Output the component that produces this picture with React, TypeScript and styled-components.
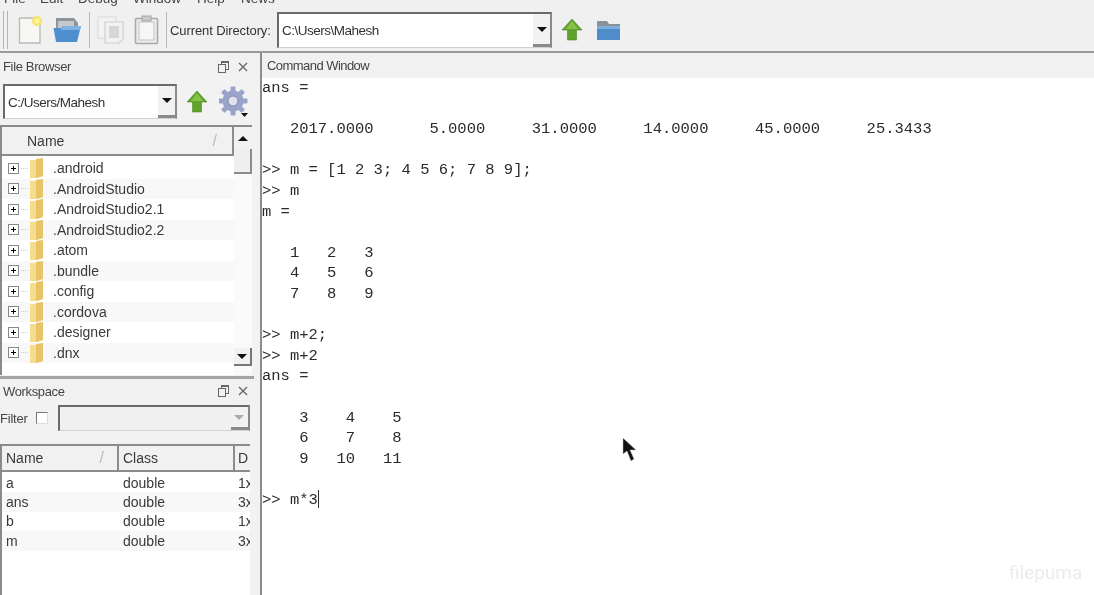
import React from "react";
import styled, { createGlobalStyle } from "styled-components";

const Global = createGlobalStyle`
  html, body { margin: 0; padding: 0; background: #fff; overflow: hidden; }
  #root { width: 1094px; height: 595px; }
`;

const Page = styled.div`
  position: relative;
  width: 1094px;
  height: 595px;
  overflow: hidden;
  display: flex;
  flex-direction: column;
  background: #f0f0f0;
  color: #333;
  font-family: "Liberation Sans", Arial, sans-serif;
  font-size: 13px;
  filter: blur(0.4px);
`;

const MenuBar = styled.div`
  height: 9px;
  flex: none;
  overflow: hidden;
  background: #f0f0f0;
`;
const MenuInner = styled.div`
  display: flex;
  margin-top: -11px;
  padding-left: 4px;
  height: 20px;
  line-height: 20px;
  font-size: 13.5px;
  color: #444;
`;
const MenuItem = styled.span<{ $w: number }>`
  width: ${(p) => p.$w}px;
  flex: none;
`;

const Toolbar = styled.div`
  height: 44px;
  flex: none;
  display: flex;
  align-items: center;
  padding-left: 3px;
  box-sizing: border-box;
  border-bottom: 2px solid #9a9a9a;
  background: #f0f0f0;
`;
const Grip = styled.div`
  width: 3px;
  height: 38px;
  border-left: 1px solid #b5b5b5;
  border-right: 1px solid #b5b5b5;
  margin-right: 10px;
`;
const Sep = styled.div`
  width: 1px;
  height: 36px;
  background: #b8b8b8;
  margin: 0 7px;
`;
const ToolIcon = styled.svg<{ $ml?: number }>`
  flex: none;
  margin-left: ${(p) => p.$ml ?? 0}px;
  display: block;
`;
const DirLabel = styled.span`
  font-size: 13px;
  letter-spacing: -0.1px;
  white-space: nowrap;
  width: 107px;
  margin-left: -4px;
  flex: none;
  color: #333;
`;

const Combo = styled.div<{ $w: number; $h: number; $disabled?: boolean; $ml?: number }>`
  width: ${(p) => p.$w}px;
  height: ${(p) => p.$h}px;
  margin-left: ${(p) => p.$ml ?? 0}px;
  flex: none;
  box-sizing: border-box;
  display: flex;
  align-items: center;
  background: ${(p) => (p.$disabled ? "#f0f0f0" : "#fff")};
  border-top: 2px solid #6a6a6a;
  border-left: 2px solid #6a6a6a;
  border-right: 2px solid #8a8a8a;
  border-bottom: 1px solid #d0d0d0;
`;
const ComboText = styled.span`
  flex: 1;
  padding-left: 3px;
  font-size: 13.5px;
  color: #333;
  letter-spacing: -0.5px;
  white-space: nowrap;
`;
const ComboBtn = styled.div<{ $muted?: boolean }>`
  width: 17px;
  align-self: stretch;
  flex: none;
  box-sizing: border-box;
  display: flex;
  align-items: center;
  justify-content: center;
  background: #f2f2f2;
  border-bottom: 3px solid #8a8a8a;
  &::after {
    content: "";
    border-left: 5px solid transparent;
    border-right: 5px solid transparent;
    border-top: 5px solid ${(p) => (p.$muted ? "#aaa" : "#111")};
  }
`;

const Body = styled.div`
  flex: 1;
  min-height: 0;
  display: flex;
`;
const Left = styled.div`
  width: 260px;
  flex: none;
  display: flex;
  flex-direction: column;
  background: #f2f2f2;
  box-sizing: border-box;
`;
const TitleBar = styled.div<{ $h: number }>`
  height: ${(p) => p.$h}px;
  flex: none;
  display: flex;
  align-items: center;
  padding: 1px 12px 0 3px;
  font-size: 13px;
  letter-spacing: -0.35px;
  color: #444;
  background: #f1f1f1;
`;
const TitleText = styled.span`
  flex: 1;
`;
const PaneBtns = styled.div`
  display: flex;
  align-items: center;
  gap: 9px;
`;

const BrowserTop = styled.div`
  height: 46px;
  flex: none;
  display: flex;
  align-items: center;
  padding: 5px 0 6px 3px;
  box-sizing: border-box;
`;

const Tree = styled.div`
  flex: none;
  width: 250px;
  height: 250px;
  display: grid;
  grid-template-columns: 232px 18px;
  grid-template-rows: 31px 1fr;
  background: #fff;
  border-left: 2px solid #8a8a8a;
  box-sizing: content-box;
`;
const HeaderCell = styled.div<{ $w?: number }>`
  box-sizing: border-box;
  display: flex;
  align-items: center;
  border-top: 2px solid #8c8c8c;
  border-bottom: 2px solid #8c8c8c;
  border-right: 2px solid #8c8c8c;
  background: #f1f1f1;
  font-size: 14px;
  color: #3a3a3a;
  ${(p) => (p.$w ? `width: ${p.$w}px; flex: none;` : "")}
`;
const NameHead = styled(HeaderCell)`
  padding-left: 25px;
  justify-content: space-between;
  padding-right: 15px;
`;
const SortMark = styled.span`
  color: #bbb;
  font-size: 16px;
`;
const Scroll = styled.div`
  grid-row: 1 / 3;
  grid-column: 2;
  display: flex;
  flex-direction: column;
  background: #fafafa;
  padding-bottom: 9px;
`;
const ScrollArrow = styled.div<{ $up?: boolean }>`
  height: ${(p) => (p.$up ? 24 : 18)}px;
  flex: none;
  display: flex;
  align-items: center;
  justify-content: center;
  background: #f1f1f1;
  box-sizing: border-box;
  ${(p) => (p.$up ? "border-top: 2px solid #8c8c8c;" : "border-bottom: 2px solid #777; border-right: 2px solid #777;")}
  &::after {
    content: "";
    border-left: 5px solid transparent;
    border-right: 5px solid transparent;
    ${(p) => (p.$up ? "border-bottom: 5px solid #111;" : "border-top: 5px solid #111;")}
  }
`;
const Thumb = styled.div`
  height: 25px;
  flex: none;
  background: #efefef;
  border-bottom: 2px solid #8c8c8c;
  border-right: 2px solid #8c8c8c;
  box-sizing: border-box;
`;
const ScrollRest = styled.div`
  flex: 1;
`;
const TreeRows = styled.div`
  padding-top: 2px;
  overflow: hidden;
`;
const TreeRow = styled.div<{ $odd: boolean }>`
  height: 20.5px;
  display: flex;
  align-items: center;
  background: ${(p) => (p.$odd ? "#f8f8f8" : "#fff")};
  font-size: 14px;
  color: #3a3a3a;
`;
const Expander = styled.span`
  width: 11px;
  height: 11px;
  margin-left: 6px;
  box-sizing: border-box;
  border: 1px solid #888;
  background: linear-gradient(#000, #000) center / 5px 1px no-repeat, linear-gradient(#000, #000) center / 1px 5px no-repeat, #fff;
  flex: none;
`;
const Dots = styled.span`
  width: 7px;
  margin: 0 1px 0 2px;
  border-top: 1px dotted #ccc;
  flex: none;
`;
const FolderText = styled.span`
  margin-left: 9px;
`;

const WorkspaceDivider = styled.div`
  height: 3px;
  flex: none;
  background: #a3a3a3;
  margin-top: 1px;
  width: 254px;
`;
const FilterRow = styled.div`
  height: 30px;
  flex: none;
  display: flex;
  align-items: center;
  font-size: 13px;
  letter-spacing: -0.2px;
  color: #444;
  margin-top: 1px;
`;
const Check = styled.span`
  width: 12px;
  height: 12px;
  margin: 0 4px 0 8px;
  background: #fff;
  border-top: 1px solid #777;
  border-left: 1px solid #777;
  border-right: 1px solid #ddd;
  border-bottom: 1px solid #ddd;
  box-sizing: border-box;
  flex: none;
`;
const Table = styled.div`
  margin-top: 11px;
  flex: 1;
  width: 250px;
  background: #fff;
  border-left: 2px solid #8a8a8a;
  box-sizing: border-box;
  display: flex;
  flex-direction: column;
`;
const TableHead = styled.div`
  height: 28px;
  flex: none;
  display: flex;
`;
const WsHead = styled(HeaderCell)`
  padding-left: 4px;
  justify-content: space-between;
  padding-right: 13px;
`;
const WsHeadLast = styled(HeaderCell)`
  padding-left: 3px;
  border-right: none;
`;
const WsRows = styled.div`
  padding-top: 1px;
`;
const WsRow = styled.div<{ $odd: boolean }>`
  height: 19.4px;
  display: flex;
  align-items: center;
  background: ${(p) => (p.$odd ? "#f8f8f8" : "#fff")};
  font-size: 14px;
  color: #3a3a3a;
  overflow: hidden;
`;
const WsCell = styled.span<{ $w: number; $pad: number }>`
  width: ${(p) => p.$w}px;
  padding-left: ${(p) => p.$pad}px;
  box-sizing: border-box;
  flex: none;
  white-space: nowrap;
  overflow: hidden;
`;

const Cmd = styled.div`
  flex: 1;
  display: flex;
  flex-direction: column;
  border-left: 2px solid #8c8c8c;
  background: #fff;
  min-width: 0;
`;
const CmdTitle = styled.div`
  height: 25px;
  flex: none;
  display: flex;
  align-items: center;
  padding-left: 5px;
  background: #f1f1f1;
  font-size: 13px;
  letter-spacing: -0.55px;
  color: #444;
`;
const Console = styled.pre`
  margin: 0;
  height: 20.6px;
  font-family: "Liberation Mono", "Courier New", monospace;
  font-size: 15.5px;
  line-height: 20.6px;
  color: #2a2a2a;
  white-space: pre;
`;
const ConsoleBox = styled.div`
  overflow: hidden;
`;
const Caret = styled.span`
  display: inline-block;
  width: 1px;
  height: 18px;
  background: #333;
  vertical-align: -4px;
`;

const Pointer = styled.svg`
  position: absolute;
  left: 622px;
  top: 437px;
`;
const Watermark = styled.span`
  position: absolute;
  left: 1009px;
  top: 561px;
  font-family: Roboto, "Liberation Sans", sans-serif;
  font-size: 19px;
  color: #ececec;
`;

const UpArrow = ({ ml = 0 }: { ml?: number }) => (
  <ToolIcon $ml={ml} width="22" height="24" viewBox="0 0 22 24">
    <path d="M11 1 L21 12 H15.5 V22 H6.5 V12 H1 Z" fill="#5fa32a" stroke="#4b8a20" strokeWidth="0.6" />
    <path d="M11 3 L17 11 H5 Z" fill="#86c24a" />
  </ToolIcon>
);

const FolderBlue = ({ ml = 0 }: { ml?: number }) => (
  <ToolIcon $ml={ml} width="25" height="22" viewBox="0 0 25 22">
    <path d="M1 2 H11 L13 5 H24 V21 H1 Z" fill="#8a9199" />
    <rect x="1" y="7" width="23" height="14" fill="#4f8cc9" />
    <rect x="1" y="7" width="23" height="3" fill="#7db0e0" />
  </ToolIcon>
);

const NewFile = () => (
  <ToolIcon width="26" height="30" viewBox="0 0 26 30">
    <path d="M1.5 3 H19 L22 6 V28 H1.5 Z" fill="#f8f7f4" stroke="#b9b9b4" strokeWidth="1.3" />
    <circle cx="19" cy="6" r="5" fill="#f5e66a" />
    <circle cx="19" cy="6" r="2.6" fill="#fff3a0" />
  </ToolIcon>
);

const OpenFolder = () => (
  <ToolIcon $ml={9} width="29" height="26" viewBox="0 0 29 26">
    <path d="M3 1 H21 L25 6 V14 H3 Z" fill="#8d949b" />
    <path d="M5 4 H21 V14 H5 Z" fill="#c6c9cc" />
    <path d="M0.5 11 H8 L10 9 H28 L24 25 H3 Z" fill="#4f8fd0" />
    <path d="M8 11 L10 9 H28 L27 13 H8 Z" fill="#7fb2e2" />
  </ToolIcon>
);

const CopyIcon = () => (
  <ToolIcon width="27" height="28" viewBox="0 0 27 28">
    <rect x="1" y="1" width="18" height="21" fill="#f3f3f3" stroke="#dcdcdc" strokeWidth="1.2" />
    <path d="M8 6 H26 V23 L22 27 H8 Z" fill="#f1f1f1" stroke="#cfcfcf" strokeWidth="1.2" />
    <rect x="12" y="10" width="10" height="12" fill="#d6d6d6" />
  </ToolIcon>
);

const PasteIcon = () => (
  <ToolIcon $ml={10} width="25" height="30" viewBox="0 0 25 30">
    <rect x="1.5" y="3.5" width="22" height="25" rx="1" fill="#ececec" stroke="#a9a9a9" strokeWidth="1.6" />
    <rect x="5" y="7" width="15" height="18" fill="#f6f6f6" stroke="#c4c4c4" />
    <rect x="8" y="1" width="9" height="5" fill="#c9c9c9" stroke="#a5a5a5" />
  </ToolIcon>
);

const Gear = () => (
  <ToolIcon $ml={11} width="30" height="32" viewBox="0 0 30 32">
    <g fill="#9aa3c9">
      <circle cx="14" cy="15" r="10.5" />
      {[0, 45, 90, 135, 180, 225, 270, 315].map((a) => (
        <rect key={a} x="11.5" y="0.5" width="5" height="6" rx="1" transform={`rotate(${a} 14 15)`} />
      ))}
    </g>
    <circle cx="14" cy="15" r="5" fill="#dfe2ee" stroke="#7f88ae" strokeWidth="1" />
    <path d="M22 27 H29 L25.5 31 Z" fill="#111" />
  </ToolIcon>
);

const RestoreClose = () => (
  <PaneBtns>
    <svg width="11" height="12" viewBox="0 0 11 12">
      <rect x="3.5" y="0.5" width="7" height="8" fill="none" stroke="#666" />
      <rect x="0.5" y="3.5" width="7" height="8" fill="#f1f1f1" stroke="#666" />
      <rect x="3" y="0" width="8" height="2" fill="#666" />
    </svg>
    <svg width="10" height="10" viewBox="0 0 10 10">
      <path d="M1 1 L9 9 M9 1 L1 9" stroke="#666" strokeWidth="1.3" />
    </svg>
  </PaneBtns>
);

const TreeFolder = () => (
  <svg width="15" height="22" viewBox="0 0 15 22" style={{ flex: "none" }}>
    <path d="M1 3 H8 L14 1 V19 L8 21 H1 Z" fill="#f6dc8d" />
    <path d="M7 2 L14 1 V19 L7 21 Z" fill="#e8c469" />
  </svg>
);

const folders = [
  ".android",
  ".AndroidStudio",
  ".AndroidStudio2.1",
  ".AndroidStudio2.2",
  ".atom",
  ".bundle",
  ".config",
  ".cordova",
  ".designer",
  ".dnx",
];

const vars = [
  ["a", "double", "1x"],
  ["ans", "double", "3x"],
  ["b", "double", "1x"],
  ["m", "double", "3x"],
];

const lines = [
  "ans =",
  "",
  "   2017.0000      5.0000     31.0000     14.0000     45.0000     25.3433",
  "",
  ">> m = [1 2 3; 4 5 6; 7 8 9];",
  ">> m",
  "m =",
  "",
  "   1   2   3",
  "   4   5   6",
  "   7   8   9",
  "",
  ">> m+2;",
  ">> m+2",
  "ans =",
  "",
  "    3    4    5",
  "    6    7    8",
  "    9   10   11",
  "",
];

export default function App() {
  return (
    <Page>
      <Global />
      <MenuBar>
        <MenuInner>
          <MenuItem $w={36}>File</MenuItem>
          <MenuItem $w={38}>Edit</MenuItem>
          <MenuItem $w={55}>Debug</MenuItem>
          <MenuItem $w={64}>Window</MenuItem>
          <MenuItem $w={44}>Help</MenuItem>
          <MenuItem $w={50}>News</MenuItem>
        </MenuInner>
      </MenuBar>
      <Toolbar>
        <Grip />
        <NewFile />
        <OpenFolder />
        <Sep />
        <CopyIcon />
        <PasteIcon />
        <Sep />
        <DirLabel>Current Directory:</DirLabel>
        <Combo $w={275} $h={36}>
          <ComboText>C:\Users\Mahesh</ComboText>
          <ComboBtn />
        </Combo>
        <UpArrow ml={9} />
        <FolderBlue ml={13} />
      </Toolbar>
      <Body>
        <Left>
          <TitleBar $h={25}>
            <TitleText>File Browser</TitleText>
            <RestoreClose />
          </TitleBar>
          <BrowserTop>
            <Combo $w={174} $h={35}>
              <ComboText>C:/Users/Mahesh</ComboText>
              <ComboBtn />
            </Combo>
            <UpArrow ml={9} />
            <Gear />
          </BrowserTop>
          <Tree>
            <NameHead>
              Name<SortMark>/</SortMark>
            </NameHead>
            <Scroll>
              <ScrollArrow $up />
              <Thumb />
              <ScrollRest />
              <ScrollArrow />
            </Scroll>
            <TreeRows>
              {folders.map((f, i) => (
                <TreeRow key={f} $odd={i % 2 === 1}>
                  <Expander />
                  <Dots />
                  <TreeFolder />
                  <FolderText>{f}</FolderText>
                </TreeRow>
              ))}
            </TreeRows>
          </Tree>
          <WorkspaceDivider />
          <TitleBar $h={22}>
            <TitleText>Workspace</TitleText>
            <RestoreClose />
          </TitleBar>
          <FilterRow>
            Filter
            <Check />
            <Combo $w={192} $h={26} $disabled $ml={6}>
              <ComboText />
              <ComboBtn $muted />
            </Combo>
          </FilterRow>
          <Table>
            <TableHead>
              <WsHead $w={117}>
                Name<SortMark>/</SortMark>
              </WsHead>
              <WsHead $w={116}>Class</WsHead>
              <WsHeadLast $w={15}>D</WsHeadLast>
            </TableHead>
            <WsRows>
              {vars.map(([n, c, d], i) => (
                <WsRow key={n} $odd={i % 2 === 1}>
                  <WsCell $w={117} $pad={4}>{n}</WsCell>
                  <WsCell $w={116} $pad={4}>{c}</WsCell>
                  <WsCell $w={15} $pad={3}>{d}</WsCell>
                </WsRow>
              ))}
            </WsRows>
          </Table>
        </Left>
        <Cmd>
          <CmdTitle>Command Window</CmdTitle>
          <ConsoleBox>
            {lines.map((l, i) => (
              <Console key={i}>{l}</Console>
            ))}
            <Console>
              {">> m*3"}
              <Caret />
            </Console>
          </ConsoleBox>
        </Cmd>
      </Body>
      <Pointer width="16" height="26" viewBox="0 0 16 26">
        <path d="M1 1 L1 17 L5 14 L9 24 L12 22 L8 13 L14 13 Z" fill="#111" stroke="#bbb" strokeWidth="0.5" />
      </Pointer>
      <Watermark>filepuma</Watermark>
    </Page>
  );
}
